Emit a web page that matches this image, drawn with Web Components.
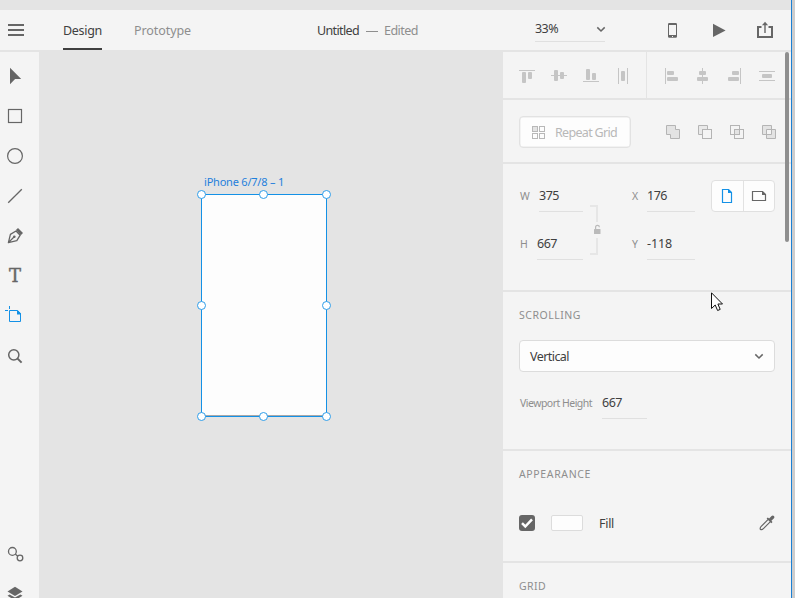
<!DOCTYPE html>
<html lang="en">
<head>
<meta charset="utf-8">
<title>Untitled</title>
<style>
html,body{margin:0;height:100%;overflow:hidden;background:#e4e4e4}
body{font:12.5px/16px "Noto Sans","Open Sans",sans-serif;color:#404040}
</style>
</head>
<body>
<design-app></design-app>
<script>
const define = (name, css, html, init) => customElements.define(name, class extends HTMLElement {
  connectedCallback() {
    if (this.shadowRoot) return;
    const root = this.attachShadow({mode: 'open'});
    const t = document.createElement('template');
    t.innerHTML = `<style>*{box-sizing:border-box}${css}</style>${typeof html === 'function' ? html(this) : html}`;
    root.append(t.content.cloneNode(true));
    if (init) init(this, root);
  }
});

/* Icons share a 24 x 24 grid. */
const bars = (...r) => r.map(([x, y, w, h]) => `<rect x="${x}" y="${y}" width="${w}" height="${h}" rx="${Math.min(w, h) > 1 ? 1 : 0}"/>`).join('');
const line = 'fill="none" stroke="currentColor"';
const icons = {
  menu: bars([5,6,16,2],[5,11,16,2],[5,16,16,2]).replace(/rx="1"/g,''),
  select: '<path d="M7 3.8 18.2 14.9 12.1 15 7 20.2Z"/>',
  rect: `<rect x="5.5" y="5.5" width="13" height="13" ${line} stroke-width="1.2"/>`,
  ellipse: `<circle cx="12" cy="12" r="7.4" ${line} stroke-width="1.2"/>`,
  line: `<path d="M5.2 18.8 18.8 5.2" ${line} stroke-width="1.3"/>`,
  pen: `<path d="M5.4 18.6 7.4 10.4 13 7 17.2 11.2 13.8 16.7Z M5.6 18.4 11 13" ${line} stroke-width="1.3" stroke-linejoin="round"/><circle cx="11.3" cy="12.8" r="1.3"/><path d="M12.9 6.1 15 4 20 9 17.8 11.2Z"/>`,
  artboard: `<path d="M6.5 6.5H14.5L17.5 9.5V17.5H6.5Z M2 6.5H5 M6.5 2V5" ${line}/><path d="M14 6.5H15L18 9.5V10.5H14Z"/>`,
  zoom: `<circle cx="10.8" cy="10.8" r="5.1" ${line} stroke-width="1.5"/><path d="M14.6 14.6 18.6 18.6" ${line} stroke-width="2"/>`,
  assets: `<circle cx="9.4" cy="9.4" r="3.9" ${line} stroke-width="1.3"/><circle cx="17" cy="16" r="2.8" ${line} stroke-width="1.3"/><path d="M12.2 12 14.8 14.2" ${line} stroke-width="1.3"/>`,
  layers: '<path d="M12 4.8 19.5 9.4 12 14 4.5 9.4Z"/><path d="M6.6 12.4 12 15.6 17.4 12.4 19.5 13.8 12 18.4 4.5 13.8Z"/>',
  phone: `<path fill-rule="evenodd" d="M9.3 5H15.7Q17 5 17 6.3V18.5Q17 19.8 15.7 19.8H9.3Q8 19.8 8 18.5V6.3Q8 5 9.3 5ZM9 7V17H16V7Z"/><rect x="12" y="18" width="1" height="1" fill="#f4f4f4"/>`,
  play: '<path d="M6 5.7 18.6 12.4 6 19Z"/>',
  share: `<path d="M8.5 9H5V19H19V9H15.5" ${line} stroke-width="2"/><path d="M12 5.5V15" ${line} stroke-width="1.4"/><path d="M12 3.8 15.1 7.3H8.9Z"/>`,
  chev: `<path d="M8.3 10.4 12 14 15.7 10.4" ${line} stroke-width="1.5"/>`,
  atop: bars([4,6,16,1],[7,8,4,11],[13,8,4,7]),
  amid: bars([4,11,16,1],[7,6,4,11],[13,8,4,7]),
  abot: bars([4,17,16,1],[7,5,4,11],[13,9,4,7]),
  dish: bars([7,4,1,16],[16,4,1,16],[10,7,4,10]),
  alft: bars([6,4,1,16],[8,7,7,4],[8,13,11,4]),
  acen: bars([11,4,1,16],[8,7,7,4],[6,13,11,4]),
  argt: bars([17,4,1,16],[9,7,7,4],[5,13,11,4]),
  disv: bars([4,7,16,1],[4,16,16,1],[7,10,10,4]),
  grid: `<g ${line}><rect x="5.5" y="6.5" width="5" height="5" fill="#e3e3e3"/><rect x="12.5" y="6.5" width="5" height="5"/><rect x="5.5" y="13.5" width="5" height="5"/><rect x="12.5" y="13.5" width="5" height="5"/></g>`,
  add: '<path d="M5.5 5.5H14.5V9.5H18.5V18.5H9.5V14.5H5.5Z" fill="#e3e3e3" stroke="currentColor"/>',
  sub: `<path d="M9.5 14.5H5.5V5.5H14.5V9.5" fill="#e9e9e9" stroke="currentColor"/><rect x="9.5" y="9.5" width="9" height="9" fill="#f4f4f4" stroke="currentColor"/>`,
  int: `<rect x="9.5" y="9.5" width="5" height="5" fill="#e3e3e3"/><rect x="5.5" y="5.5" width="9" height="9" ${line}/><rect x="9.5" y="9.5" width="9" height="9" ${line}/>`,
  exc: `<path fill="#e3e3e3" stroke="currentColor" fill-rule="evenodd" d="M5.5 5.5H14.5V14.5H5.5Z M9.5 9.5H18.5V18.5H9.5Z"/>`,
  portrait: `<path d="M7.5 5.5H13.5L16.5 8.5V18.5H7.5Z" ${line} stroke-width="1.2"/><path d="M13 5.2V9H17V8.5L13.7 5.2Z"/>`,
  landscape: `<path d="M5.5 7.5H15.5L18.5 10.5V16.5H5.5Z" ${line} stroke-width="1.2"/><path d="M15 7.2V11H19V10.4L15.7 7.2Z"/>`,
  lock: `<rect x="8" y="11" width="6.5" height="5" rx=".6"/><path d="M9.600 11V9.300A1.900 1.900 0 0 1 13.400 9.200" ${line} stroke-width="1.2"/>`,
  dropper: `<path d="M13.2 8.4 6.2 15.4Q4.8 16.8 5.3 18.2Q6.8 19.2 8.4 17.6L15.4 10.6" ${line} stroke-width="1.2"/><path d="M11.6 7.6 12.8 6.4 14.1 7.5 16.6 4.9Q17.8 4 19 5Q19.9 6.2 19 7.3L16.4 9.8 17.5 11 16.3 12.2Z"/>`,
  check: '<path d="M7 12.2 10.3 15.5 17 8.3" fill="none" stroke="#fff" stroke-width="2.5"/>'
};
define('ui-icon', ':host{display:block;flex:none;width:24px;height:24px}svg{display:block;width:24px;height:24px;fill:currentColor;overflow:visible}',
  el => `<svg viewBox="0 0 24 24">${icons[el.getAttribute('name')]}</svg>`);

/* Single-line text; "fit" spreads the tracking over a given pixel width. */
define('ui-text', ':host{display:block;flex:none;white-space:nowrap}span{display:inline-block}', '<span><slot></slot></span>', (el, root) => {
  const w = +el.getAttribute('fit'), s = root.querySelector('span');
  if (w) {
    s.style.letterSpacing = (w - s.getBoundingClientRect().width) / el.textContent.length + 'px';
    el.style.width = w + 'px';
  }
});

define('app-header', `:host{display:flex;height:42px;padding-left:3px;background:#f4f4f4;border-bottom:2px solid #e4e4e4;color:#666}
  ui-icon{margin-top:8px}
  .tab{height:40px;padding-top:13px;margin-left:36px}.on{color:#404040;border-bottom:2px solid #404040}
  .off{margin-left:32px;color:#8e8e8e}.doc{display:flex;gap:7px;margin:13px 0 0 126px;color:#8e8e8e}.doc :first-child{color:#404040}
  .dash{width:12px;height:1px;background:#8e8e8e;margin-top:8px}
  .zoom{display:flex;justify-content:space-between;width:70px;height:32px;border-bottom:1px solid #e0e0e0;margin-left:117px;color:#404040;padding-top:11px}
  .zoom ui-icon{margin:-4px -8px 0 0;color:#666}`,
  `<ui-icon name="menu"></ui-icon>
  <div class="tab on"><ui-text fit="39">Design</ui-text></div><div class="tab off"><ui-text fit="57">Prototype</ui-text></div>
  <div class="doc"><ui-text fit="42">Untitled</ui-text><i class="dash"></i><ui-text fit="34" style="margin-left:-1px">Edited</ui-text></div>
  <div class="zoom"><ui-text fit="23">33%</ui-text><ui-icon name="chev"></ui-icon></div>
  <ui-icon name="phone" style="margin-left:55px"></ui-icon><ui-icon name="play" style="margin-left:23px"></ui-icon><ui-icon name="share" style="margin-left:22px"></ui-icon>`);

define('tool-bar', `:host{display:flex;flex-direction:column;gap:16px;width:39px;padding:12px 3px 0;background:#f4f4f4;color:#666;overflow:hidden}
  .t{flex:none;font:18px/24px "DejaVu Serif",serif;height:24px;width:24px;text-align:center;-webkit-text-stroke:.4px #666}.on{color:#1491e6}.low{margin-top:158px}`,
  `<ui-icon name="select"></ui-icon><ui-icon name="rect"></ui-icon><ui-icon name="ellipse"></ui-icon><ui-icon name="line"></ui-icon><ui-icon name="pen"></ui-icon>
  <div class="t">T</div><ui-icon name="artboard" class="on"></ui-icon><ui-icon name="zoom"></ui-icon><ui-icon name="assets" class="low"></ui-icon><ui-icon name="layers"></ui-icon>`);

define('art-board', `:host{position:absolute;left:162px;top:142px;width:126px;height:223px;background:#fdfdfd;border:1px solid #1491e6;box-shadow:inset 0 -1px #a9a9a9}
  ui-text{position:absolute;left:2px;top:-21px;font-size:11px;color:#1f7fdc}
  i{position:absolute;width:9px;height:9px;border:1px solid #2e9de9;border-radius:50%;background:#fff}`,
  () => `<ui-text fit="80">iPhone 6/7/8 – 1</ui-text>` + [[-5,-5],[57.4,-5],[120,-5],[-5,106],[120,106],[-5,217],[57.4,217],[120,217]].map(([x, y]) => `<i style="left:${x}px;top:${y}px"></i>`).join(''));
define('design-canvas', ':host{display:block;position:relative;flex:1;background:#e4e4e4}', '<slot></slot>');

define('panel-section', ':host{display:block;height:var(--h);border-bottom:2px solid #e4e4e4;padding:0 10px 0 16px}ui-text{font-size:10.5px;line-height:15px;color:#8e8e8e;padding-top:16px}',
  el => (el.hasAttribute('heading') ? `<ui-text fit="${el.getAttribute('w')}">${el.getAttribute('heading')}</ui-text>` : '') + '<slot></slot>');

define('value-field', `:host{display:flex;height:32px}label{color:#8e8e8e;font-size:10.5px;padding-top:8px;width:var(--lw)}
  div{flex:1;border-bottom:1px solid #e0e0e0;padding-top:8px}`,
  el => `<label><ui-text fit="${el.getAttribute('lfit')}">${el.getAttribute('label')}</ui-text></label><div><ui-text fit="${el.getAttribute('vfit')}">${el.getAttribute('value')}</ui-text></div>`);

define('property-panel', `:host{display:block;position:relative;width:288px;background:#f4f4f4;overflow:hidden}
  .row{display:flex}.pale{color:#c5c5c5}.group{gap:8px;padding-top:12px}.group.r{border-left:1px solid #e4e4e4;padding-left:12px;height:46px}
  .repeat{display:flex;width:112px;height:32px;margin:16px 30px 0 0;border:1px solid #e2e2e2;box-shadow:inset 0 0 0 .5px #e8e8e8;border-radius:4px;background:#fdfdfd;padding:3px 0 0 7px;color:#b8b8b8}
  .repeat ui-text{margin:5px 0 0 4px}
  .geo{display:grid;grid-template-columns:63px 7px 8px 34px 63px 16px 64px;padding:16px 0 0 1px}
  .fields{display:grid;row-gap:16px}.link{display:flex;flex-direction:column;width:8px;padding-top:25px;height:75px;color:#bababa}
  .b{width:8px;height:17px;border:solid #e6e6e6;border-width:2px 2px 0 0;flex:none}.b.two{border-width:0 2px 2px 0}.link ui-icon{margin:-4px 0 -4px -4px}
  .seg{display:flex;width:64px;height:32px;border:1px solid #e0e0e0;border-radius:4px;background:#fdfdfd;color:#666}
  .seg div{padding:3px 3px;width:31px}.seg div+div{border-left:1px solid #e2e2e2}.blue{color:#1491e6}
  .select{display:flex;justify-content:space-between;width:256px;height:32px;border:1px solid #dcdcdc;border-radius:4px;background:#fdfdfd;margin-top:17px;padding:8px 3px 0 10px}
  .select ui-icon{margin-top:-5px;color:#666}
  .fill{display:flex;align-items:center;margin-top:29px;height:24px;width:256px}
  .check{width:16px;height:16px;border-radius:3px;background:#666;padding:0}.check ui-icon{margin:-4px}.sw{width:32px;height:16px;border:1px solid #dcdcdc;border-radius:2px;background:#fdfdfd;margin:0 16px}
  .bar{position:absolute;right:2px;top:0;width:4px;height:190px;border-radius:2px;background:#8e8e8e}`,
  `<panel-section style="--h:48px"><div class="row pale" style="margin-left:-4px">
    <div class="row group" style="width:131px">${['atop','amid','abot','dish'].map(n => `<ui-icon name="${n}"></ui-icon>`).join('')}</div>
    <div class="row group r">${['alft','acen','argt','disv'].map(n => `<ui-icon name="${n}"></ui-icon>`).join('')}</div></div></panel-section>
  <panel-section style="--h:64px"><div class="row"><div class="repeat"><ui-icon name="grid"></ui-icon><ui-text fit="62">Repeat Grid</ui-text></div>
    <div class="row" style="gap:8px;padding-top:20px;color:#b4b4b4">${['add','sub','int','exc'].map(n => `<ui-icon name="${n}"></ui-icon>`).join('')}</div></div></panel-section>
  <panel-section style="--h:128px"><div class="geo">
    <div class="fields"><value-field label="W" lfit="10" value="375" vfit="20" style="--lw:19px"></value-field><value-field label="H" lfit="8" value="667" vfit="20" style="--lw:17px"></value-field></div><span></span>
    <div class="link"><div class="b"></div><ui-icon name="lock"></ui-icon><div class="b two"></div></div><span></span>
    <div class="fields"><value-field label="X" lfit="7" value="176" vfit="20" style="--lw:15px"></value-field><value-field label="Y" lfit="7" value="-118" vfit="25" style="--lw:15px"></value-field></div><span></span>
    <div class="seg"><div class="blue"><ui-icon name="portrait"></ui-icon></div><div><ui-icon name="landscape"></ui-icon></div></div></div></panel-section>
  <panel-section style="--h:159px" heading="SCROLLING" w="62"><div class="select"><ui-text fit="39">Vertical</ui-text><ui-icon name="chev"></ui-icon></div>
    <value-field label="Viewport Height" lfit="72" value="667" vfit="20" style="--lw:82px;width:127px;margin:15px 0 0 1px"></value-field></panel-section>
  <panel-section style="--h:112px" heading="APPEARANCE" w="72"><div class="fill"><div class="check"><ui-icon name="check"></ui-icon></div><div class="sw"></div><ui-text fit="15" style="padding-top:2px">Fill</ui-text><ui-icon name="dropper" style="margin:0 -4px 0 auto;color:#666"></ui-icon></div></panel-section>
  <panel-section style="--h:80px" heading="GRID" w="27"></panel-section>
  <div class="bar"></div>`);

define('mouse-pointer', ':host{position:absolute;left:711px;top:292px;width:13px;height:21px}svg{display:block}',
  '<svg width="13" height="21"><path d="M.5 .8V16.5L4.2 13 6.6 18.5 9.2 17.4 6.9 12H11.5Z" fill="#fff" stroke="#111" stroke-width="1"/></svg>');

define('design-app', `:host{display:flex;position:relative;width:795px;height:598px;overflow:hidden;background:#e4e4e4}
  .win{width:791px;display:flex;flex-direction:column;padding-top:10px}.body{display:flex;flex:1;min-height:0}
  .edge{width:4px;border-left:1px solid #1c80d4;background:#cdcdcd}`,
  `<div class="win"><app-header></app-header><div class="body"><tool-bar></tool-bar><design-canvas><art-board></art-board></design-canvas><property-panel></property-panel></div></div><div class="edge"></div><mouse-pointer></mouse-pointer>`);
</script>
</body>
</html>
